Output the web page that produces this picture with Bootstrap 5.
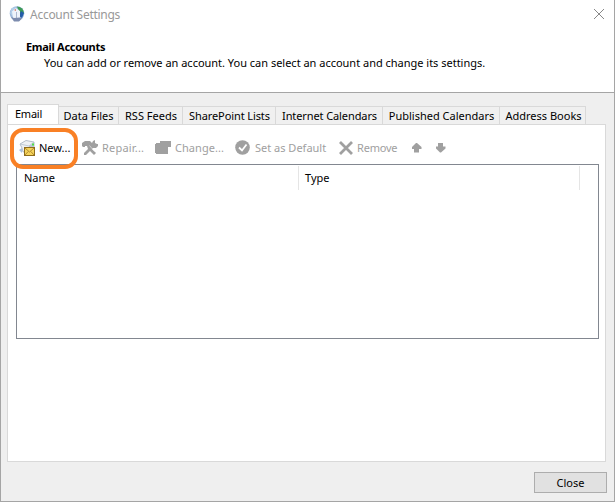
<!DOCTYPE html>
<html lang="en">
<head>
<meta charset="utf-8">
<title>Account Settings</title>
<link href="https://cdn.jsdelivr.net/npm/bootstrap@5.3.0/dist/css/bootstrap.min.css" rel="stylesheet">
<style>
body{margin:0;overflow:hidden;font-family:"Noto Sans","Open Sans",sans-serif;font-size:11px;line-height:16px;color:#000}
.dialog-win{width:615px;height:502px;background:#efefef;border:solid #a5a5a5;border-width:0 1px 1px}
.dialog-head{height:93px;border-bottom:1px solid #a5a5a5}
.title-row{height:28px;padding:0 9px 0 8px}
.title-text{font-size:12px;color:#999;margin-left:5px;padding-top:2px;letter-spacing:-.27px}
.head-title{margin:11px 0 0 25px;letter-spacing:-.3px}
.head-desc{margin:0 0 0 43px;letter-spacing:-.01px}
.tabs-row{height:21px;margin:11px 0 -1px 6px;position:relative}
.tabs-row .nav-link{padding:1px 0 0 1px;height:18px;margin:0 0 1px;line-height:16px;color:#000;border:solid #d9d9d9;border-width:1px 1px 0 0;border-radius:0;text-align:center;background:#f0f0f0;white-space:nowrap}
.tabs-row .nav-link.active{height:21px;margin:0;border-color:#d9d9d9;border-width:1px 1px 0 1px;background:#fff;color:#000;padding:1px 0 0 7px;text-align:left}
.tabs-row .w1{width:52px;letter-spacing:-.25px}
.tabs-row .w2{width:60px;padding-left:0}
.w3{width:64px}.w4{width:93px;letter-spacing:-.1px}.w5{width:107px;letter-spacing:-.1px}.w6{width:117px}
.tabs-row .w7{width:86px;padding-left:2px}
.panel{width:599px;height:338px;margin-left:6px;border:1px solid #d9d9d9}
.tool-row{height:39px;padding:6px 0 0 11px}
.tool{flex:none;height:34px;color:#a0a0a0;white-space:nowrap}
.tool svg{flex:none;margin-right:4px}
.t1{width:63px}.t2{width:73px}.t3{width:80px}.t4{width:104px}.t5{width:73px}.t6{width:24px}
.t2 span{letter-spacing:.2px}.t3 span{letter-spacing:.05px}.t5 span{letter-spacing:-.2px}
.ring{left:2px;top:3px;width:68px;height:41px;border:4px solid #f98025;border-radius:13px}
.list-box{width:583px;height:175px;margin-left:8px;border:1px solid #828790}
.col-head{height:24px;margin-top:1px;border-right:1px solid #e5e5e5;padding:4px 0 0 7px}
.col-a{width:282px}.col-b{width:281px;padding-left:6px}
.btn-close-dlg{width:73px;height:21px;margin:10px 7px 0 0;padding:0;font-size:11px;line-height:19px;border:1px solid #adadad;border-radius:0;background:#e1e1e1;color:#000}
</style>
</head>
<body>
<div class="dialog-win d-flex flex-column">
  <header class="dialog-head bg-white">
    <div class="title-row d-flex align-items-center">
      <svg width="16" height="16" viewBox="0 0 16 16"><circle cx="8" cy="7.500" r="7.300" fill="#9db8da"/><path d="M8 .4a7.200 7.200 0 0 1 7 6.500L12 9 9.500 4z" fill="#3c9a55"/><path d="M12 5l3 2-2 5-3-2z" fill="#255ca8"/><path d="M1 7l2-5 4-1-3 10z" fill="#b1cee9"/><path d="M3 5.500L7 2l4 3v7H4z" fill="#eef3fa"/><path d="M7.500 6v6" stroke="#9aa8c4" stroke-width=".8"/><path d="M5 4l2-1v2z" fill="#d67562"/><path d="M2 11l3 1 6-.5 2 1-3 3H5z" fill="#7d8cae"/></svg>
      <span class="title-text">Account Settings</span>
      <svg class="ms-auto" width="12" height="12" viewBox="0 0 12 12"><path d="M1 1l10 10M11 1L1 11" stroke="#888" fill="none"/></svg>
    </div>
    <div class="head-title fw-bold">Email Accounts</div>
    <div class="head-desc">You can add or remove an account. You can select an account and change its settings.</div>
  </header>
  <nav class="tabs-row nav d-flex align-items-end flex-nowrap">
    <a class="nav-link active w1">Email</a><a class="nav-link w2">Data Files</a><a class="nav-link w3">RSS Feeds</a><a class="nav-link w4">SharePoint Lists</a><a class="nav-link w5">Internet Calendars</a><a class="nav-link w6">Published Calendars</a><a class="nav-link w7">Address Books</a>
  </nav>
  <main class="panel bg-white position-relative">
    <div class="tool-row d-flex">
      <div class="tool d-flex align-items-center text-black t1"><svg width="16" height="16" viewBox="0 0 16 16"><path d="M1 4l6-3.500L15 2v6l-5 3-6 1-1-4z" fill="#eef1f5" stroke="#a3afbe" stroke-width=".8"/><path d="M1 4l9 2 5-4" fill="none" stroke="#b5c1ce" stroke-width=".8"/><path d="M0 10l3-2v5z" fill="#a9c0df"/><path d="M10 6l5-3v4l-5 2z" fill="#bcc5d0"/><rect x="13" y="3.500" width="2" height="2" fill="#4ee046"/><rect x="5.500" y="7.500" width="10" height="8" fill="#f5d35a" stroke="#8f6c1c"/><path d="M6 8l4.500 4L15 8M6 15l3.200-3.500M15 15l-3.200-3.500" fill="none" stroke="#9e7728" stroke-width=".8"/></svg><span>New...</span></div>
      <div class="tool d-flex align-items-center t2"><svg width="16" height="16" viewBox="0 0 16 16"><path d="M0 3l3-2h5l2 2 1-2 2-1v3l2 1h1v2l-2 2h-3l-1 1 4 4-2 2-4-4-4 4H2v-2l4-4-1-3-2 0v1H1L0 6z" fill="#a0a0a0"/><path d="M7.500 5.500l5 6" stroke="#fff" stroke-width=".5"/></svg><span>Repair...</span></div>
      <div class="tool d-flex align-items-center t3"><svg width="16" height="16" viewBox="0 0 16 16"><path d="M0 4h1V3h4V1h11v6h-3v7H1v-1H0z" fill="#a0a0a0"/></svg><span>Change...</span></div>
      <div class="tool d-flex align-items-center t4"><svg width="16" height="16" viewBox="0 0 16 16"><circle cx="7.500" cy="7.500" r="7.300" fill="#a0a0a0"/><path d="M4 7.500l3 3 4.500-6" stroke="#fff" stroke-width="1.800" fill="none"/></svg><span>Set as Default</span></div>
      <div class="tool d-flex align-items-center t5"><svg width="14" height="14" viewBox="0 0 14 14"><path d="M1 1l12 12M13 1L1 13" stroke="#a0a0a0" stroke-width="2.800"/></svg><span>Remove</span></div>
      <div class="tool d-flex align-items-center t6"><svg width="10" height="10" viewBox="0 0 10 10"><path d="M4 0h1l4.500 4v2H7v3.500H2V6H0V4z" fill="#a0a0a0"/></svg></div>
      <div class="tool d-flex align-items-center t7"><svg width="10" height="10" viewBox="0 0 10 10"><path d="M4 9.500h1l4.500-4v-2H7V0H2v3.500H0v2z" fill="#a0a0a0"/></svg></div>
    </div>
    <div class="list-box d-flex bg-white"><div class="col-head col-a">Name</div><div class="col-head col-b">Type</div></div>
    <div class="ring position-absolute"></div>
  </main>
  <footer class="d-flex justify-content-end"><button class="btn btn-close-dlg">Close</button></footer>
</div>
<script src="https://cdn.jsdelivr.net/npm/bootstrap@5.3.0/dist/js/bootstrap.bundle.min.js"></script>
</body>
</html>
